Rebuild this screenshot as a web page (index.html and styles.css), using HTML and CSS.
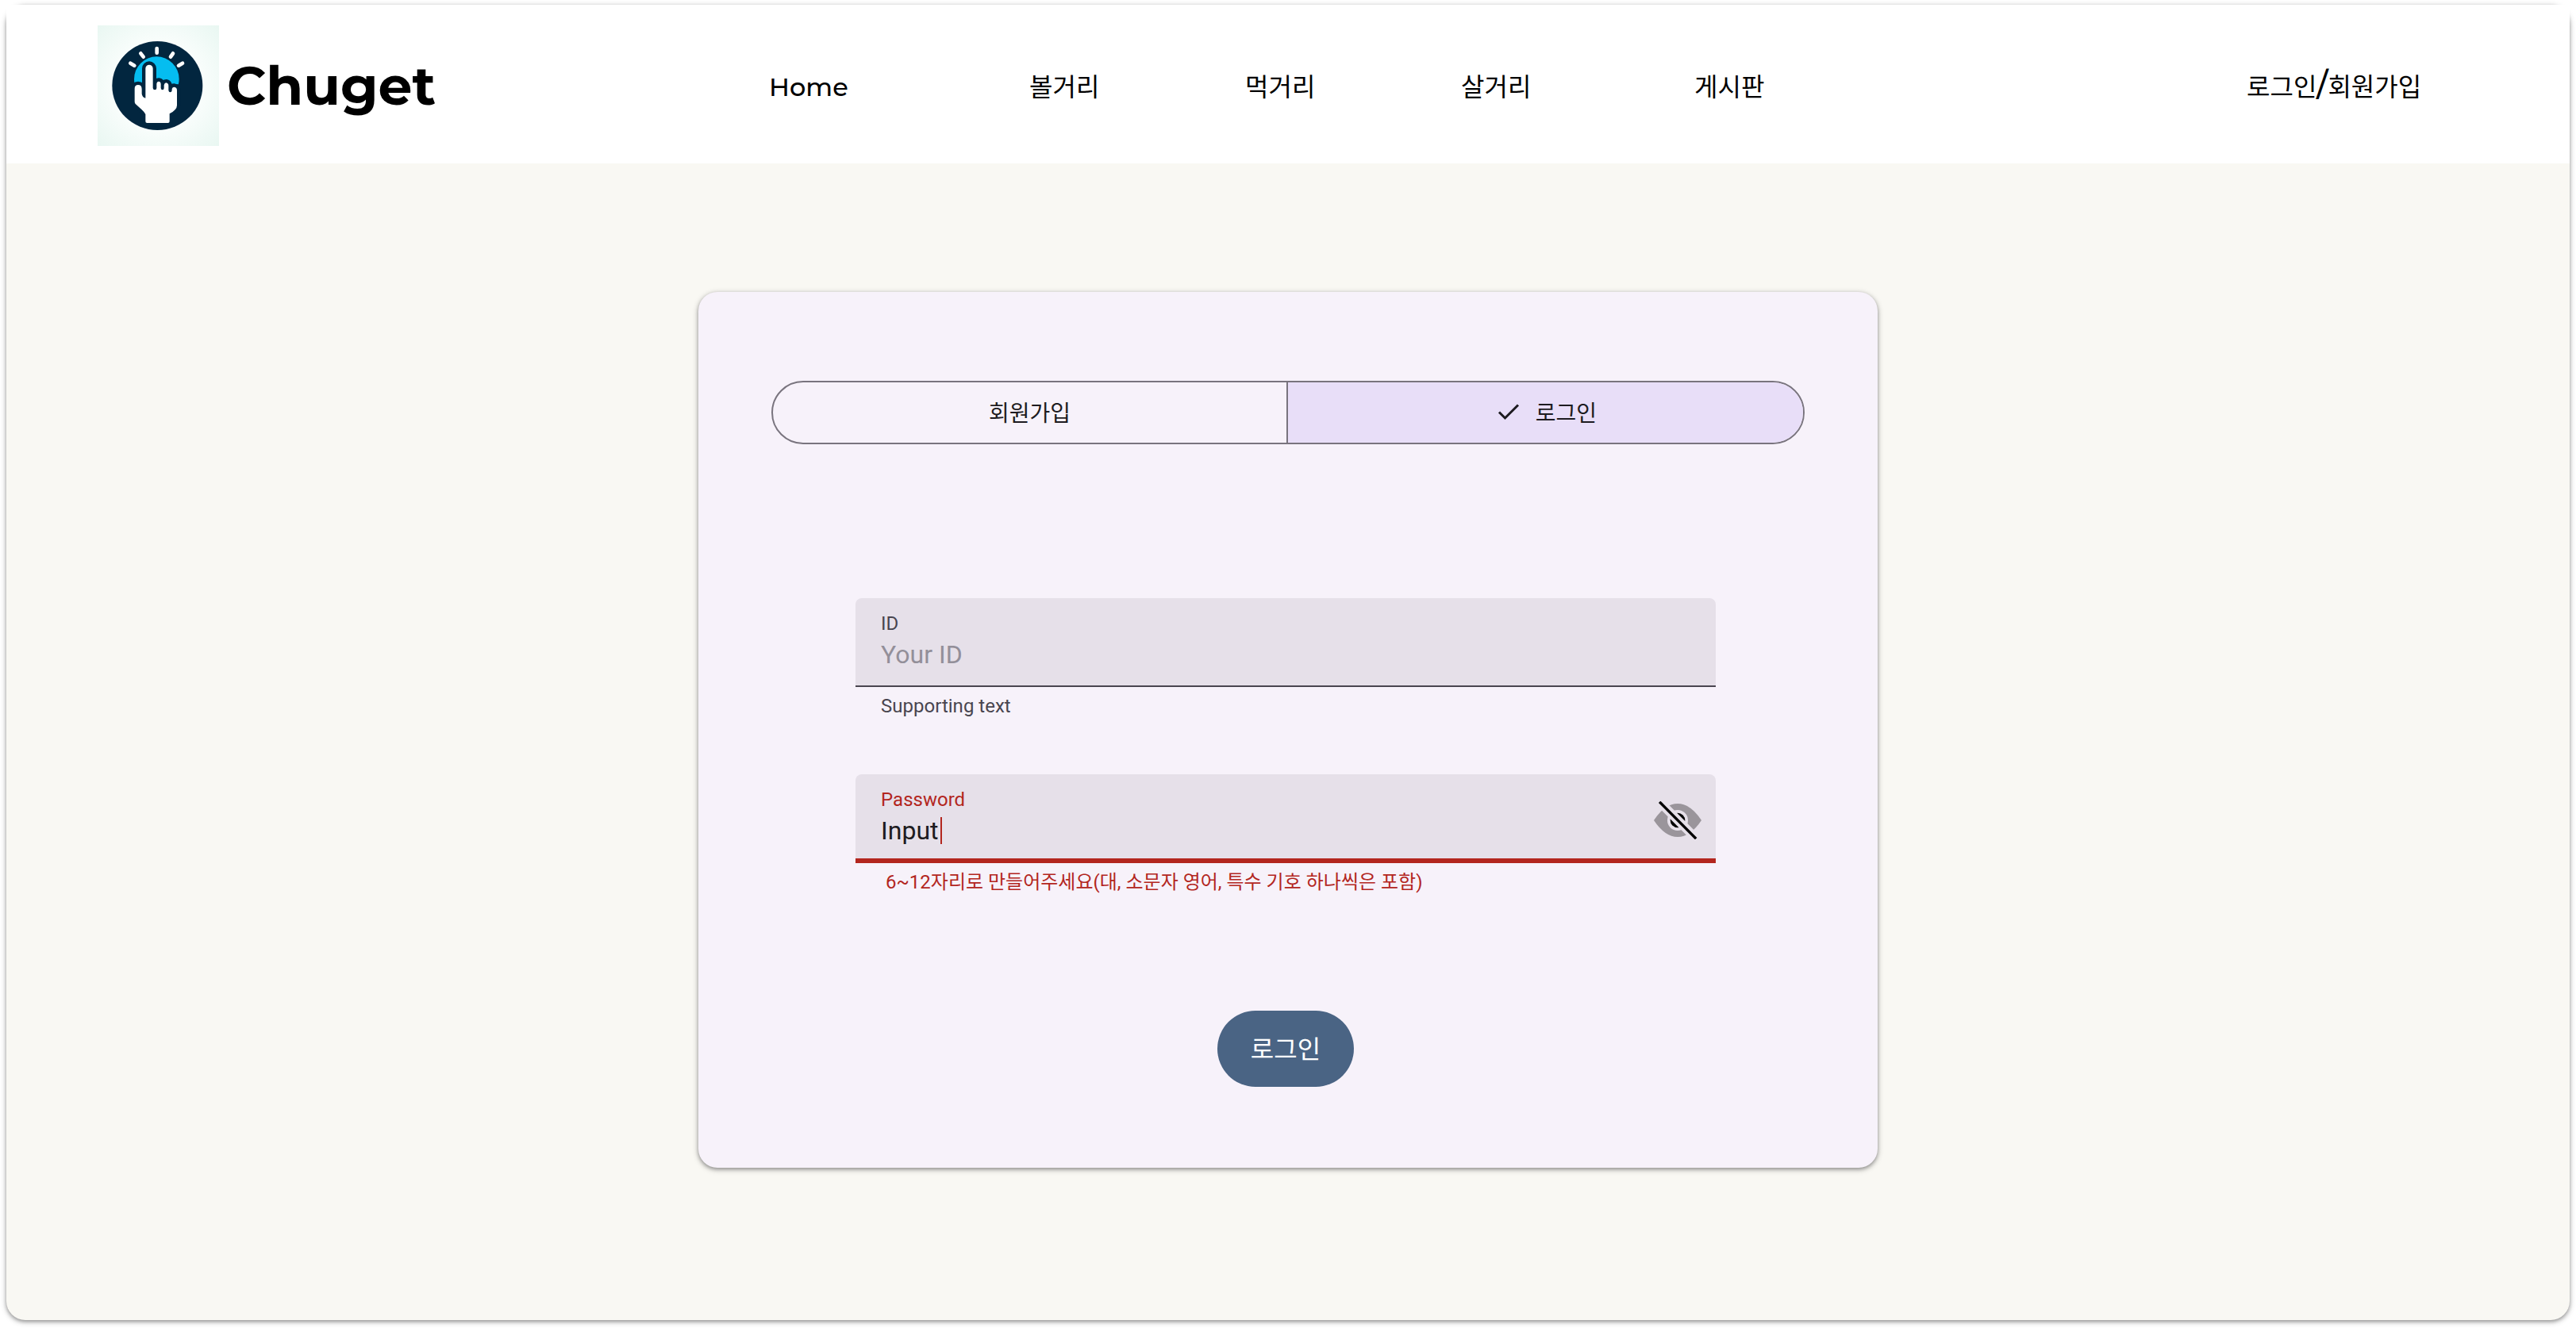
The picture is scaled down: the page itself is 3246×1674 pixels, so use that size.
FILE: index.html
```html
<!DOCTYPE html>
<html lang="ko">
<head>
<meta charset="utf-8">
<meta name="viewport" content="width=device-width, initial-scale=1">
<title>Chuget</title>
<link rel="stylesheet" href="styles.css">
</head>
<body>
<div class="frame">
  <header class="header">
    <a class="brand" href="#">
      <svg class="brand-logo" viewBox="9 6 459 456" preserveAspectRatio="none" aria-hidden="true">
        <defs>
          <radialGradient id="glow" cx="50%" cy="50%" r="70%">
            <stop offset="55%" stop-color="#f8fdfb"/>
            <stop offset="100%" stop-color="#e9f7f2"/>
          </radialGradient>
          <clipPath id="dome"><rect x="140" y="110" width="190" height="119"/></clipPath>
        </defs>
        <rect x="9" y="6" width="459" height="456" fill="url(#glow)"/>
        <ellipse cx="235" cy="234" rx="171" ry="168" fill="#02263f"/>
        <circle cx="232" cy="209" r="85" fill="#05bdf0" clip-path="url(#dome)"/>
        <path class="brand-hand" d="M149 245Q149 231 162 231Q176 231 176 247V265Q178 279 190 281V169A14 14 0 0 1 218 169V243Q219 250 225 250Q232 250 232 243V227Q233 218 240 218Q248 219 248 228V243Q249 250 254 250Q260 250 260 243V232Q262 223 268 223Q277 225 277 234V252Q278 259 284 259Q290 258 290 251V246Q292 239 299 239Q309 241 309 251V308Q309 325 281 340V369Q281 375 275 375H196Q190 375 190 369V342Q186 334 176 325L152 303Q149 300 149 294Z"/>
        <path class="brand-rays" d="M233 93V110M172 112L182 125M294 112L285 125M133 149L148 158M330 149L315 158"/>
      </svg>
      <span class="brand-name">Chuget</span>
    </a>
    <nav class="nav">
      <a class="nav-link nav-home" href="#">Home</a>
      <a class="nav-link" href="#">볼거리</a>
      <a class="nav-link" href="#">먹거리</a>
      <a class="nav-link" href="#">살거리</a>
      <a class="nav-link" href="#">게시판</a>
      <a class="nav-link" href="#">로그인<span class="slash">/</span>회원가입</a>
    </nav>
  </header>

  <main class="main">
    <section class="card">
      <div class="tabs">
        <button class="tab" type="button" aria-pressed="false">회원가입</button>
        <button class="tab tab-active" type="button" aria-pressed="true">
          <svg class="tab-check" viewBox="0 0 36 36" aria-hidden="true"><path d="M6 18.500L13.500 26L30 9.500"/></svg>
          로그인
        </button>
      </div>

      <form class="form">
        <div class="field">
          <div class="field-box">
            <label class="field-label" for="user-id">ID</label>
            <input class="field-input" id="user-id" type="text" placeholder="Your ID" aria-describedby="id-help">
          </div>
          <p class="field-help" id="id-help">Supporting text</p>
        </div>

        <div class="field field-error">
          <div class="field-box">
            <label class="field-label" for="user-pw">Password</label>
            <div class="field-entry">
              <input class="field-input" id="user-pw" type="text" value="Input" aria-invalid="true" aria-describedby="pw-help">
              <span class="caret"></span>
            </div>
            <button class="eye" type="button" aria-label="비밀번호 표시">
              <svg viewBox="552 210 180 144" aria-hidden="true">
                <path fill="#9a959b" d="M552 282Q594 219 642 219Q690 219 732 282Q690 345 642 345Q594 345 552 282Z"/>
                <circle cx="642" cy="282" r="39" fill="#e6e0e9"/>
                <circle cx="642" cy="282" r="28" fill="#000"/>
                <path d="M570 209L714 353" stroke="#e6e0e9" stroke-width="34"/>
                <path d="M577 216L708 348" stroke="#000" stroke-width="10" stroke-linecap="square"/>
              </svg>
            </button>
          </div>
          <p class="field-help" id="pw-help">&nbsp;6~12자리로 만들어주세요(대, 소문자 영어, 특수 기호 하나씩은 포함)</p>
        </div>

        <button class="submit" type="submit">로그인</button>
      </form>
    </section>
  </main>
</div>
</body>
</html>
```
FILE: styles.css
```css
* { box-sizing: border-box; }

body {
  margin: 0;
  padding: 6px 8px 10px;
  background: #fff;
  color: #1d1b20;
  font-family: Roboto, "Noto Sans CJK KR", sans-serif;
}

button, input { font: inherit; color: inherit; }

.frame {
  background: #f9f8f3;
  border-radius: 24px;
  box-shadow: 0 2px 4px rgba(0, 0, 0, .3), 0 2px 6px 2px rgba(0, 0, 0, .15);
}

.header {
  display: grid;
  grid-template-columns: 846fr 2269fr;
  align-items: center;
  min-height: 200px;
  padding: 4px 0 0 115px;
  background: #fff;
}

.brand {
  display: flex;
  align-items: center;
  gap: 10px;
  color: #000;
  text-decoration: none;
}

.brand-logo { width: 153px; height: 152px; }
.brand-hand { fill: #fff; stroke: #02263f; stroke-width: 26; stroke-linejoin: round; paint-order: stroke; }
.brand-rays { fill: none; stroke: #fff; stroke-width: 14; stroke-linecap: round; }

.brand-name {
  font: 700 68px/88px Montserrat, Inter, sans-serif;
}

.nav {
  display: grid;
  grid-template-columns: 328fr 272fr 272fr 294fr 696fr 407fr;
  align-items: baseline;
}

.nav-link {
  color: #000;
  font: 400 32px/48px "Noto Sans CJK KR", sans-serif;
  text-decoration: none;
  white-space: nowrap;
}

.nav-home { font: 500 32px/48px Montserrat, Inter, sans-serif; }
.slash { font: 500 40px/48px Montserrat, Inter, sans-serif; }

.main { padding: 162px 0 192px; }

.card {
  width: 46%;
  margin: 0 auto;
  padding: 112px 92px 102px;
  background: #f7f2fa;
  border-radius: 24px;
  box-shadow: 0 2px 4px rgba(0, 0, 0, .3), 0 2px 6px 2px rgba(0, 0, 0, .15);
}

.tabs {
  display: grid;
  grid-template-columns: 1fr 1fr;
  height: 80px;
  border: 2px solid #79747e;
  border-radius: 40px;
  overflow: hidden;
}

.tab {
  display: flex;
  align-items: center;
  justify-content: center;
  gap: 16px;
  padding: 0 0 2px;
  border: 0;
  border-right: 2px solid #79747e;
  background: none;
  font: 400 28px/40px "Noto Sans CJK KR", sans-serif;
}

.tab-active {
  border-right: 0;
  background: #e8def8;
}

.tab-check { width: 36px; height: 36px; fill: none; stroke: #1d1b20; stroke-width: 3; }

.form {
  display: flex;
  flex-direction: column;
  margin: 194px 112px 0 106px;
}

.field + .field { margin-top: 70px; }

.field-box {
  position: relative;
  height: 112px;
  padding: 16px 32px;
  border-bottom: 2px solid #49454f;
  border-radius: 8px 8px 0 0;
  background: #e6e0e9;
}

.field-label {
  display: block;
  color: #49454f;
  font-size: 24px;
  line-height: 32px;
}

.field-input {
  display: block;
  width: 100%;
  height: 46px;
  padding: 0;
  border: 0;
  outline: 0;
  background: none;
  font-size: 32px;
  line-height: 46px;
}

.field-input::placeholder { color: #938f99; opacity: 1; }

.field-entry { display: flex; align-items: center; gap: 2px; }
.field-entry .field-input { width: auto; field-sizing: content; }
.caret { width: 2px; height: 34px; background: #b3261e; }

.field-help {
  margin: 0;
  padding: 8px 32px 0;
  color: #49454f;
  font-size: 24px;
  line-height: 32px;
}

.field-error .field-box { border-bottom: 6px solid #b3261e; }
.field-error .field-label, .field-error .field-help { color: #b3261e; }

.eye {
  position: absolute;
  top: 34px;
  right: 18px;
  width: 60px;
  height: 48px;
  padding: 0;
  border: 0;
  background: none;
}

.eye svg { display: block; width: 60px; height: 48px; }

.submit {
  align-self: center;
  margin-top: 146px;
  padding: 22px 42px 26px;
  border: 0;
  border-radius: 48px;
  background: #4a6484;
  color: #fff;
  font: 400 32px/48px "Noto Sans CJK KR", sans-serif;
}
```
